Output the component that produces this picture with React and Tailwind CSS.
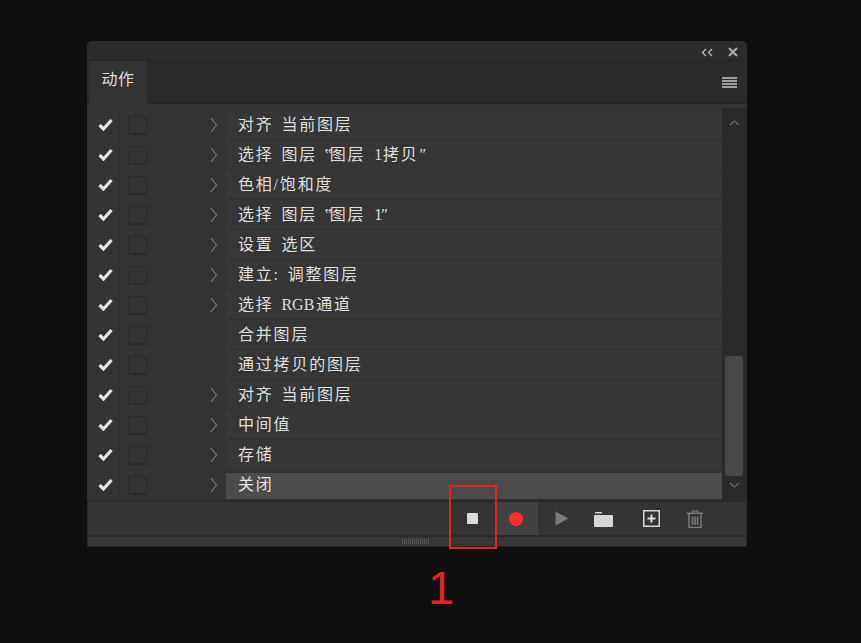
const CJK = "font-['Liberation_Serif','Noto_Sans_CJK_SC',serif]";

const quoted = (tail) => (
  <>
    选择 图层 <span className="tracking-[-2.2px]">‟</span>图层 <span className="ml-[1px] tracking-[-2px] [word-spacing:0px]">1</span>
    {tail}
  </>
);

const rows = [
  ["对齐 当前图层", true],
  [quoted(<><span className="[word-spacing:-3px]"> </span>拷贝<span className="ml-[1px]">″</span></>), true],
  ["色相/饱和度", true],
  [quoted(<span className="ml-[1px]">″</span>), true],
  ["设置 选区", true],
  ["建立: 调整图层", true],
  [<>选择 <span className="tracking-normal">RGB</span><span className="ml-[2px]">通道</span></>, true],
  ["合并图层", false],
  ["通过拷贝的图层", false],
  ["对齐 当前图层", true],
  ["中间值", true],
  ["存储", true],
  ["关闭", true],
];

function Check() {
  return (
    <svg width="15" height="13" viewBox="0 0 15 13">
      <path d="M1.5 7 L5.5 11 L13.5 2" fill="none" stroke="#e2e2e2" strokeWidth="3.2" />
    </svg>
  );
}

function Row({ text, arrow, selected }) {
  return (
    <div className="flex h-[30px] shrink-0">
      <div className="flex w-[33px] shrink-0 items-center justify-center pl-[4px] pb-[2px] border-r border-[#303030]">
        <Check />
      </div>
      <div className="flex w-[106px] shrink-0 items-center">
        <div className="ml-[8px] h-[19px] w-[19px] border border-[#2b2b2b] border-b-2" />
        {arrow && (
          <svg className="ml-[63px]" width="8" height="16" viewBox="0 0 8 16">
            <path d="M1 1 L6.5 8 L1 15" fill="none" stroke="#8f8f8f" strokeWidth="1" />
          </svg>
        )}
      </div>
      <div
        className={`flex min-w-0 flex-1 items-center pl-[12px] text-[16px] leading-none tracking-[1.8px] [word-spacing:2px] ${CJK} ${
          selected
            ? "mt-[3px] mb-[1px] bg-[#4b4b4b] text-[#e6e6e6] pb-[3px]"
            : "bg-[#363636] text-[#dedede] border-b border-[#2f2f2f]"
        }`}
      >
        <span className="whitespace-pre">{text}</span>
      </div>
    </div>
  );
}

export default function App() {
  return (
    <div className="relative h-[643px] w-[861px] overflow-hidden bg-[#0f0f0f] pt-[41px] pl-[87px]">
      <div className="flex h-[506px] w-[660px] flex-col overflow-hidden rounded-t-[5px] bg-[#333333] border-b border-[#262626]">
        {/* title bar */}
        <div className="flex h-[20px] shrink-0 items-center justify-end gap-[15px] bg-[#2c2c2c] pr-[9px] border-b border-[#262626]">
          <svg className="mt-[3px]" width="12" height="9" viewBox="0 0 12 9">
            <path d="M5 1 L1.5 4.5 L5 8 M11 1 L7.5 4.5 L11 8" fill="none" stroke="#bdbdbd" strokeWidth="1.3" />
          </svg>
          <svg className="mt-[3px]" width="10" height="10" viewBox="0 0 10 10">
            <path d="M1 1 L9 9 M9 1 L1 9" fill="none" stroke="#a8a8a8" strokeWidth="2.2" />
          </svg>
        </div>
        {/* tab bar */}
        <div className="flex h-[43px] shrink-0 bg-[#2b2b2b] border-b-2 border-[#262626]">
          <div className="ml-[2px] flex h-[43px] w-[58px] items-center justify-center bg-[#333333] pb-[9px] font-['Noto_Sans_CJK_SC',sans-serif] text-[16px] tracking-[0.5px] text-[#dcdcdc]">
            动作
          </div>
          <div className="ml-auto mr-[10px] mt-[2px] flex flex-col gap-[1px] self-center">
            <div className="h-[2px] w-[15px] bg-[#a0a0a0]" />
            <div className="h-[2px] w-[15px] bg-[#a0a0a0]" />
            <div className="h-[2px] w-[15px] bg-[#a0a0a0]" />
            <div className="h-[2px] w-[15px] bg-[#a0a0a0]" />
          </div>
        </div>
        {/* list + scrollbar */}
        <div className="flex min-h-0 flex-1 pt-[4px]">
          <div className="flex min-w-0 flex-1 flex-col pt-[2px]">
            {rows.map(([t, a], i) => (
              <Row key={i} text={t} arrow={a} selected={i === rows.length - 1} />
            ))}
          </div>
          <div className="flex w-[25px] shrink-0 flex-col items-center bg-[#2a2a2a] pr-[1px]">
            <svg className="mt-[12px]" width="11" height="6" viewBox="0 0 11 6">
              <path d="M1 5 L5.5 1 L10 5" fill="none" stroke="#8a8a8a" strokeWidth="1" />
            </svg>
            <div className="mt-[230px] h-[120px] w-[18px] rounded-[3px] bg-[#484848]" />
            <svg className="mt-[6px]" width="11" height="6" viewBox="0 0 11 6">
              <path d="M1 1 L5.5 5 L10 1" fill="none" stroke="#8a8a8a" strokeWidth="1" />
            </svg>
          </div>
        </div>
        {/* footer */}
        <div className="flex h-[35px] shrink-0 items-stretch bg-[#343434] border-t-2 border-x border-[#2a2a2a]">
          <div className="flex w-[408px] items-center justify-end pr-[18px]">
            <div className="h-[11px] w-[11px] rounded-[1px] bg-[#dcdcdc]" />
          </div>
          <div className="flex w-[42px] items-center justify-center bg-[#414141] pr-[2px]">
            <div className="h-[14px] w-[14px] rounded-full bg-[#ff2f2f]" />
          </div>
          <div className="flex flex-1 items-center">
            <svg className="ml-[17px]" width="14" height="15" viewBox="0 0 14 15">
              <path d="M0.5 0.5 L13.5 7.5 L0.5 14.5 Z" fill="#7b7b7b" />
            </svg>
            <svg className="ml-[25px]" width="19" height="16" viewBox="0 0 19 16">
              <path d="M1 3 V1.5 Q1 1 1.5 1 H7 Q8 1 8.5 2.5 H1 Z M0.5 4 H18 Q19 4 19 5 V15 Q19 16 18 16 H1 Q0 16 0 15 V4.5 Q0 4 0.5 4 Z" fill="#d6d6d6" />
            </svg>
            <svg className="ml-[30px]" width="17" height="17" viewBox="0 0 17 17">
              <rect x="0.75" y="0.75" width="15.5" height="15.5" fill="none" stroke="#d4d4d4" strokeWidth="1.5" />
              <path d="M8.5 4.5 V12.5 M4.5 8.5 H12.5" stroke="#e0e0e0" strokeWidth="2" />
            </svg>
            <svg className="ml-[27px]" width="16" height="18" viewBox="0 0 16 18">
              <path d="M5.5 2.5 V1 H10.5 V2.5" fill="none" stroke="#7b7b7b" strokeWidth="1.2" />
              <path d="M0 2.5 H16 V4 H0 Z" fill="#7b7b7b" />
              <path d="M2 4 V16.5 Q2 17.5 3 17.5 H13 Q14 17.5 14 16.5 V4" fill="none" stroke="#7b7b7b" strokeWidth="1.5" />
              <path d="M5.5 6.5 V15 M8 6.5 V15 M10.5 6.5 V15" stroke="#7b7b7b" strokeWidth="1.5" />
            </svg>
          </div>
        </div>
        {/* bottom strip */}
        <div className="flex h-[11px] shrink-0 items-center justify-center bg-[#383838] border-t-2 border-x border-[#2a2a2a]">
          <div className="mr-[2px] h-[5px] w-[28px] bg-[repeating-linear-gradient(90deg,#555_0,#555_1px,transparent_1px,transparent_2px)]" />
        </div>
      </div>
      {/* annotation */}
      <div className="absolute left-[449px] top-[485px] h-[64px] w-[48px] border-2 border-[#e8202a]" />
      <div className="absolute left-[428px] top-[561px] font-['Liberation_Sans',sans-serif] text-[47px] leading-[54px] text-[#e8202a]">1</div>
    </div>
  );
}
